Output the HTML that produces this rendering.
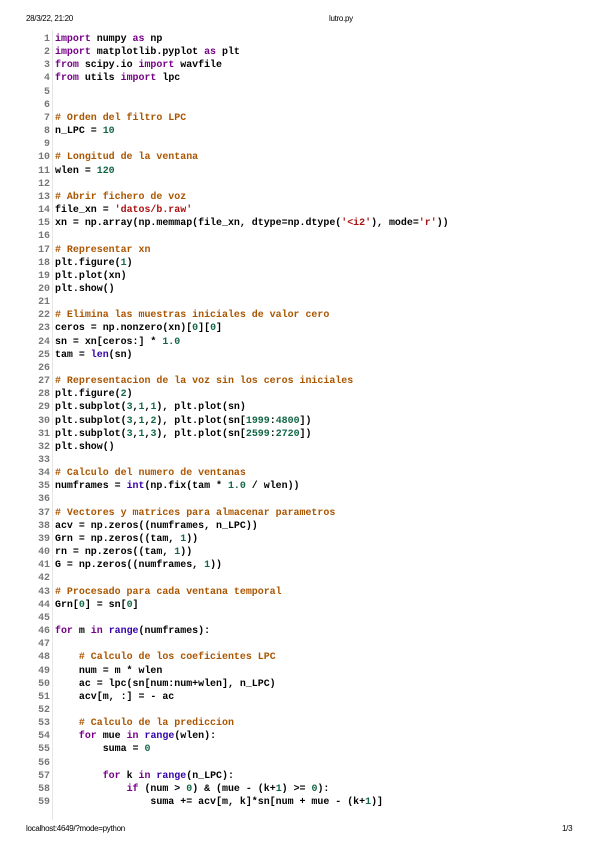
<!DOCTYPE html>
<html><head><meta charset="utf-8"><style>
body{margin:0;width:600px;height:848px;background:#fff;position:relative;overflow:hidden}
.hd{position:absolute;font-family:"Liberation Sans",sans-serif;font-size:8px;color:#000;letter-spacing:-0.3px}
.gut{position:absolute;left:52px;top:30px;width:1px;height:790px;background:#e6e6e6}
pre{position:absolute;left:0;top:32px;margin:0;font-family:"Liberation Mono",monospace;font-size:9.95px;line-height:13.15px;color:#000;font-weight:bold}
.n{display:inline-block;width:50px;text-align:right;color:#777;margin-right:5px}
.k{color:#708}.c{color:#a50}.m{color:#164}.s{color:#a11}.b{color:#30a}
</style></head><body>
<div class="hd" style="left:26px;top:14px">28/3/22, 21:20</div>
<div class="hd" style="left:329px;top:14px">lutro.py</div>
<div class="gut"></div>
<pre><span class="n">1</span><span class="k">import</span> numpy <span class="k">as</span> np
<span class="n">2</span><span class="k">import</span> matplotlib.pyplot <span class="k">as</span> plt
<span class="n">3</span><span class="k">from</span> scipy.io <span class="k">import</span> wavfile
<span class="n">4</span><span class="k">from</span> utils <span class="k">import</span> lpc
<span class="n">5</span>
<span class="n">6</span>
<span class="n">7</span><span class="c"># Orden del filtro LPC</span>
<span class="n">8</span>n_LPC = <span class="m">10</span>
<span class="n">9</span>
<span class="n">10</span><span class="c"># Longitud de la ventana</span>
<span class="n">11</span>wlen = <span class="m">120</span>
<span class="n">12</span>
<span class="n">13</span><span class="c"># Abrir fichero de voz</span>
<span class="n">14</span>file_xn = <span class="s">'datos/b.raw'</span>
<span class="n">15</span>xn = np.array(np.memmap(file_xn, dtype=np.dtype(<span class="s">'&lt;i2'</span>), mode=<span class="s">'r'</span>))
<span class="n">16</span>
<span class="n">17</span><span class="c"># Representar xn</span>
<span class="n">18</span>plt.figure(<span class="m">1</span>)
<span class="n">19</span>plt.plot(xn)
<span class="n">20</span>plt.show()
<span class="n">21</span>
<span class="n">22</span><span class="c"># Elimina las muestras iniciales de valor cero</span>
<span class="n">23</span>ceros = np.nonzero(xn)[<span class="m">0</span>][<span class="m">0</span>]
<span class="n">24</span>sn = xn[ceros:] * <span class="m">1.0</span>
<span class="n">25</span>tam = <span class="b">len</span>(sn)
<span class="n">26</span>
<span class="n">27</span><span class="c"># Representacion de la voz sin los ceros iniciales</span>
<span class="n">28</span>plt.figure(<span class="m">2</span>)
<span class="n">29</span>plt.subplot(<span class="m">3</span>,<span class="m">1</span>,<span class="m">1</span>), plt.plot(sn)
<span class="n">30</span>plt.subplot(<span class="m">3</span>,<span class="m">1</span>,<span class="m">2</span>), plt.plot(sn[<span class="m">1999</span>:<span class="m">4800</span>])
<span class="n">31</span>plt.subplot(<span class="m">3</span>,<span class="m">1</span>,<span class="m">3</span>), plt.plot(sn[<span class="m">2599</span>:<span class="m">2720</span>])
<span class="n">32</span>plt.show()
<span class="n">33</span>
<span class="n">34</span><span class="c"># Calculo del numero de ventanas</span>
<span class="n">35</span>numframes = <span class="b">int</span>(np.fix(tam * <span class="m">1.0</span> / wlen))
<span class="n">36</span>
<span class="n">37</span><span class="c"># Vectores y matrices para almacenar parametros</span>
<span class="n">38</span>acv = np.zeros((numframes, n_LPC))
<span class="n">39</span>Grn = np.zeros((tam, <span class="m">1</span>))
<span class="n">40</span>rn = np.zeros((tam, <span class="m">1</span>))
<span class="n">41</span>G = np.zeros((numframes, <span class="m">1</span>))
<span class="n">42</span>
<span class="n">43</span><span class="c"># Procesado para cada ventana temporal</span>
<span class="n">44</span>Grn[<span class="m">0</span>] = sn[<span class="m">0</span>]
<span class="n">45</span>
<span class="n">46</span><span class="k">for</span> m <span class="k">in</span> <span class="b">range</span>(numframes):
<span class="n">47</span>
<span class="n">48</span>    <span class="c"># Calculo de los coeficientes LPC</span>
<span class="n">49</span>    num = m * wlen
<span class="n">50</span>    ac = lpc(sn[num:num+wlen], n_LPC)
<span class="n">51</span>    acv[m, :] = - ac
<span class="n">52</span>
<span class="n">53</span>    <span class="c"># Calculo de la prediccion</span>
<span class="n">54</span>    <span class="k">for</span> mue <span class="k">in</span> <span class="b">range</span>(wlen):
<span class="n">55</span>        suma = <span class="m">0</span>
<span class="n">56</span>
<span class="n">57</span>        <span class="k">for</span> k <span class="k">in</span> <span class="b">range</span>(n_LPC):
<span class="n">58</span>            <span class="k">if</span> (num &gt; <span class="m">0</span>) &amp; (mue - (k+<span class="m">1</span>) &gt;= <span class="m">0</span>):
<span class="n">59</span>                suma += acv[m, k]*sn[num + mue - (k+<span class="m">1</span>)]
</pre>
<div class="hd" style="left:26px;top:824px">localhost:4649/?mode=python</div>
<div class="hd" style="left:562px;top:824px">1/3</div>
</body></html>
